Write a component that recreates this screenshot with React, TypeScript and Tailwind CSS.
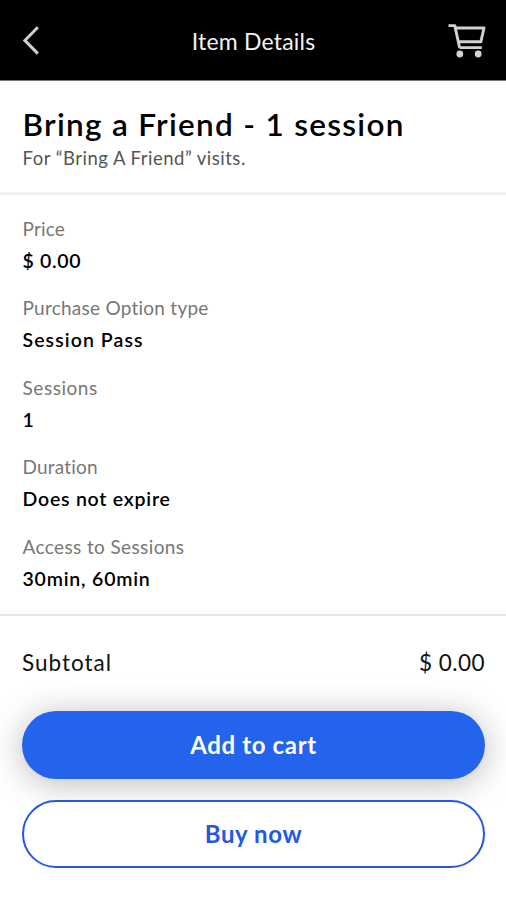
const details = [
  { label: "Price", value: "$ 0.00", labelTracking: "tracking-[0.15px]", valueTracking: "tracking-[0.65px]" },
  { label: "Purchase Option type", value: "Session Pass", labelTracking: "tracking-[0.25px]", valueTracking: "tracking-[1.08px]" },
  { label: "Sessions", value: "1", labelTracking: "tracking-[0.55px]", valueTracking: "tracking-[0px]" },
  { label: "Duration", value: "Does not expire", labelTracking: "tracking-[0.2px]", valueTracking: "tracking-[0.77px]" },
  { label: "Access to Sessions", value: "30min, 60min", labelTracking: "tracking-[0.38px]", valueTracking: "tracking-[0.8px]" },
];

function BackIcon() {
  return (
    <svg width="20" height="32" viewBox="0 0 20 32" fill="none" stroke="#cfcfcf" strokeWidth="3">
      <path d="M17.8 3.2 4.9 16.4 17.8 29.6" />
    </svg>
  );
}

function CartIcon() {
  return (
    <svg width="40" height="36" viewBox="0 0 40 36" fill="none" stroke="#d2d2d2" strokeWidth="2.9" strokeLinejoin="round">
      <path d="M1.5 3.6H7.8L12.6 25.6M8.5 6H37L33.8 19.8H11.4M12.4 25.6H34.8" />
      <circle cx="12.8" cy="32" r="3.4" fill="#d2d2d2" stroke="none" />
      <circle cx="31.2" cy="32" r="3.4" fill="#d2d2d2" stroke="none" />
    </svg>
  );
}

export default function App() {
  return (
    <div className="flex h-[900px] w-[506px] flex-col overflow-hidden bg-white font-['Lato','Open_Sans',sans-serif] text-black">
      <header className="flex h-[81px] shrink-0 items-center justify-between border-b border-[#777] bg-black pr-[19px] pl-5">
        <button aria-label="Back" className="w-10"><BackIcon /></button>
        <h1 className="pt-0.5 text-[23px] leading-8 tracking-[0.2px] text-[#f2f2f2]">Item Details</h1>
        <button aria-label="Cart"><CartIcon /></button>
      </header>

      <section className="h-[114px] shrink-0 border-b-[3px] border-[#efefef] px-[22.5px] pt-[23px]">
        <h2 className="text-[31.5px] leading-10 font-semibold tracking-[1.3px] whitespace-nowrap">Bring a Friend - 1 session</h2>
        <p className="text-[18.5px] leading-7 tracking-[0.5px] text-[#555]">For “Bring A Friend” visits.</p>
      </section>

      <dl className="flex h-[421px] shrink-0 flex-col gap-[15.6px] border-b-2 border-[#e6e6e6] px-[22.5px] pt-[17.6px]">
        {details.map((item) => (
          <div key={item.label}>
            <dt className={`text-[19px] leading-8 text-[#777] ${item.labelTracking}`}>{item.label}</dt>
            <dd className={`text-[19.5px] leading-8 font-semibold ${item.valueTracking}`}>{item.value}</dd>
          </div>
        ))}
      </dl>

      <footer className="flex flex-col pt-[31px] pr-[21px] pl-[22px]">
        <div className="flex justify-between text-[22.5px] leading-8 text-[#111]">
          <span className="tracking-[1px]">Subtotal</span>
          <span className="tracking-[0.45px]">$ 0.00</span>
        </div>
        <button className="mt-8 h-[68px] rounded-full bg-[#2463eb] text-[24px] font-bold tracking-[0.65px] text-white shadow-[0_4px_34px_rgba(0,0,0,0.28)]">Add to cart</button>
        <button className="relative mt-[21px] h-[68px] rounded-full border-2 border-[#2459df] bg-white text-[24px] font-bold tracking-[0.6px] text-[#2459df]">Buy now</button>
      </footer>
    </div>
  );
}
